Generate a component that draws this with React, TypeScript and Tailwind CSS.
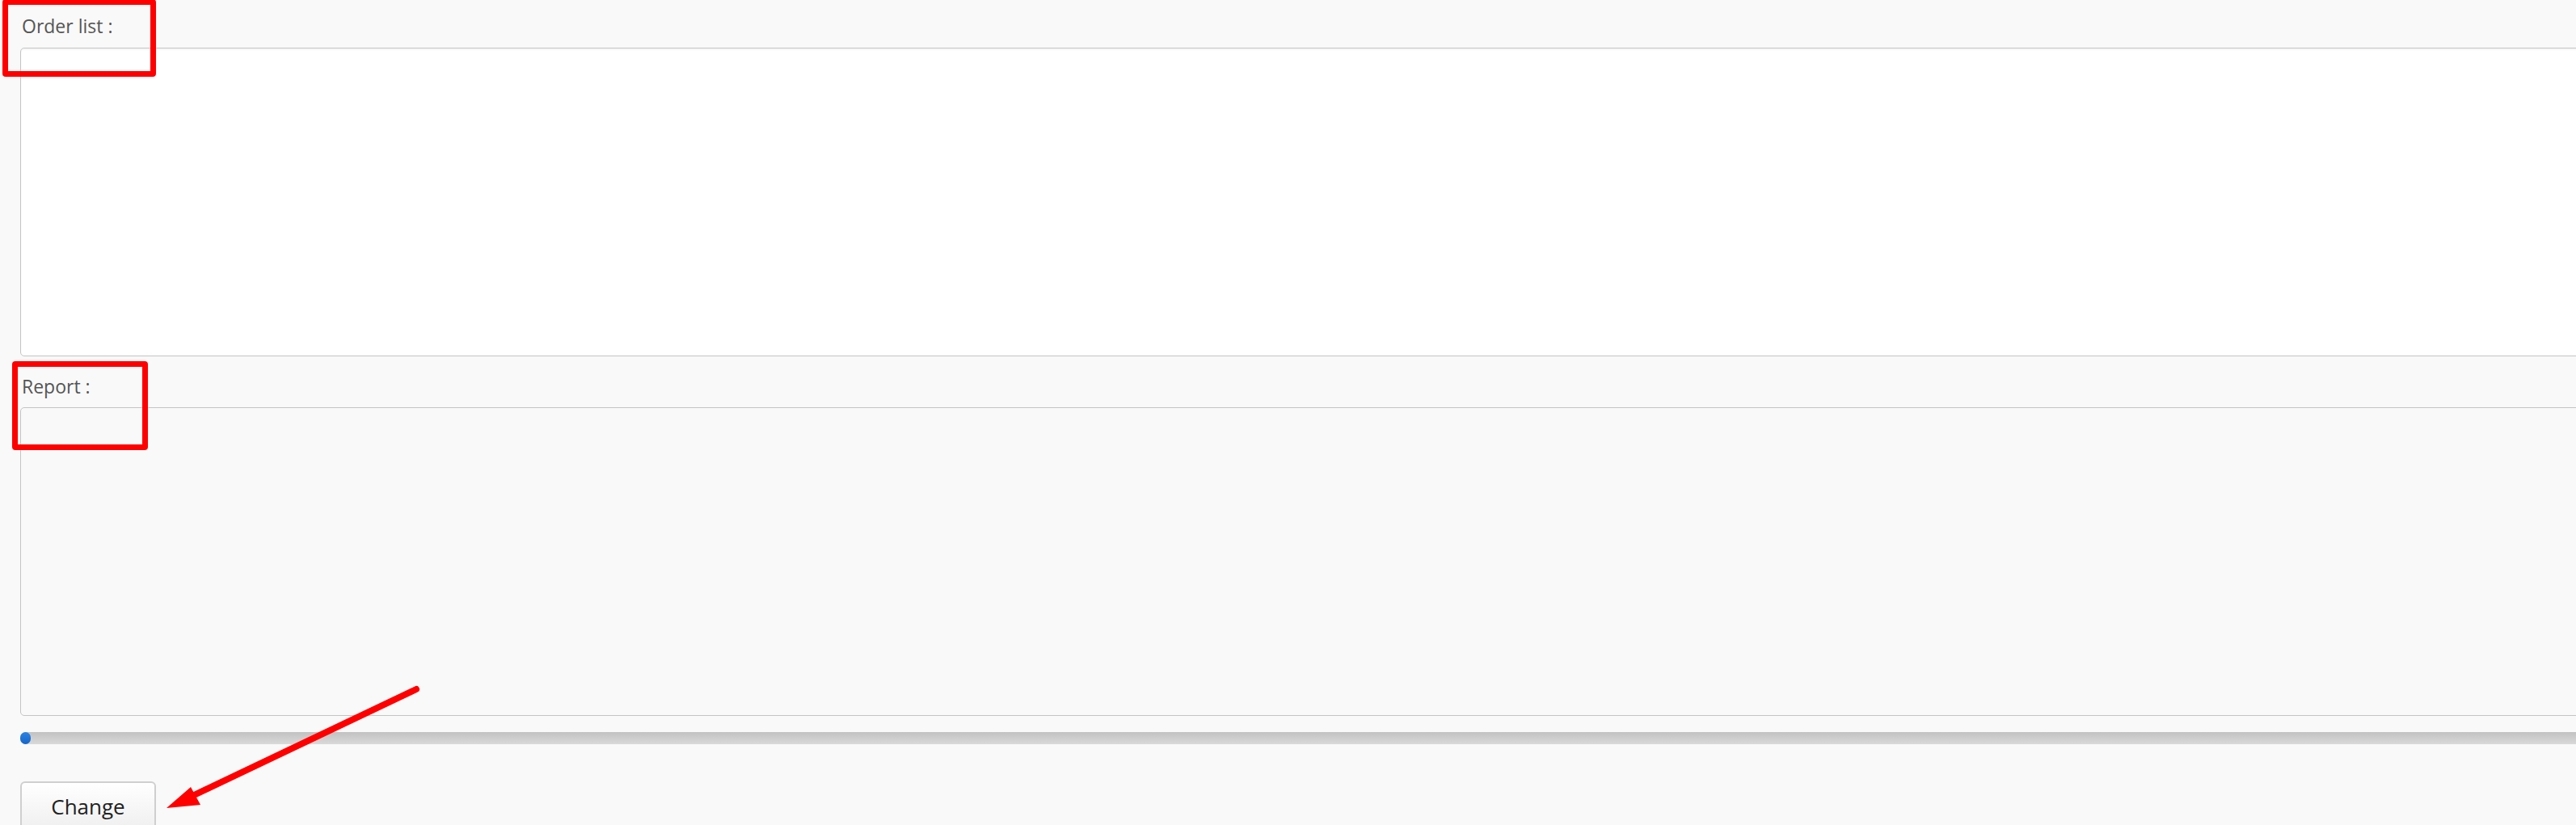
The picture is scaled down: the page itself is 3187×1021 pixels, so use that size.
import type { ReactNode } from "react";

function Label({ children, className = "" }: { children: ReactNode; className?: string }) {
  return <div className={`text-[23px] leading-[30px] text-[#555555] ${className}`}>{children}</div>;
}

export default function App() {
  return (
    <div
      className="relative h-[1021px] w-full overflow-hidden bg-[#f9f9f9]"
      style={{ fontFamily: '"Open Sans", "Liberation Sans", sans-serif' }}
    >
      <div className="flex flex-col pl-[25px]">
        <Label className="mt-[17px] mb-[12px] pl-[2px]">Order list :</Label>
        <textarea
          readOnly
          className="h-[382px] w-[calc(100%+20px)] resize-none rounded-[5px] border border-[#c4c4c4] bg-white shadow-[inset_0_2px_2px_rgba(0,0,0,0.04)] outline-none"
        />
        <Label className="mt-[22px] mb-[11px] pl-[2px]">Report :</Label>
        <textarea
          readOnly
          className="h-[382px] w-[calc(100%+20px)] resize-none rounded-[5px] border border-[#c4c4c4] bg-[#f9f9f9] outline-none"
        />
        <div className="mt-[20px] flex h-[15px] w-[calc(100%+20px)] items-center rounded-l-full bg-gradient-to-b from-[#c2c2c2] to-[#d9d9d9]">
          <div className="h-[15px] w-[13px] rounded-full bg-gradient-to-b from-[#2a82e4] to-[#1565c8]" />
        </div>
        <button
          type="button"
          className="mt-[46px] h-[62px] w-[168px] self-start rounded-[6px] border-2 border-[#cfcfcf] bg-gradient-to-b from-[#ffffff] to-[#efefef] text-[26px] text-[#222222]"
        >
          Change
        </button>
      </div>

      {/* annotations */}
      <div className="absolute left-[3px] top-[-1px] h-[96px] w-[190px] rounded-[4px] border-[7px] border-[#ff0000]" />
      <div className="absolute left-[15px] top-[447px] h-[110px] w-[168px] rounded-[4px] border-[7px] border-[#ff0000]" />
      <svg className="absolute left-0 top-0" width="600" height="1021" viewBox="0 0 600 1021">
        <line x1="515" y1="853" x2="238" y2="985" stroke="#ff0000" strokeWidth="8" strokeLinecap="round" />
        <polygon points="206,1000 236,974 248,996" fill="#ff0000" />
      </svg>
    </div>
  );
}
